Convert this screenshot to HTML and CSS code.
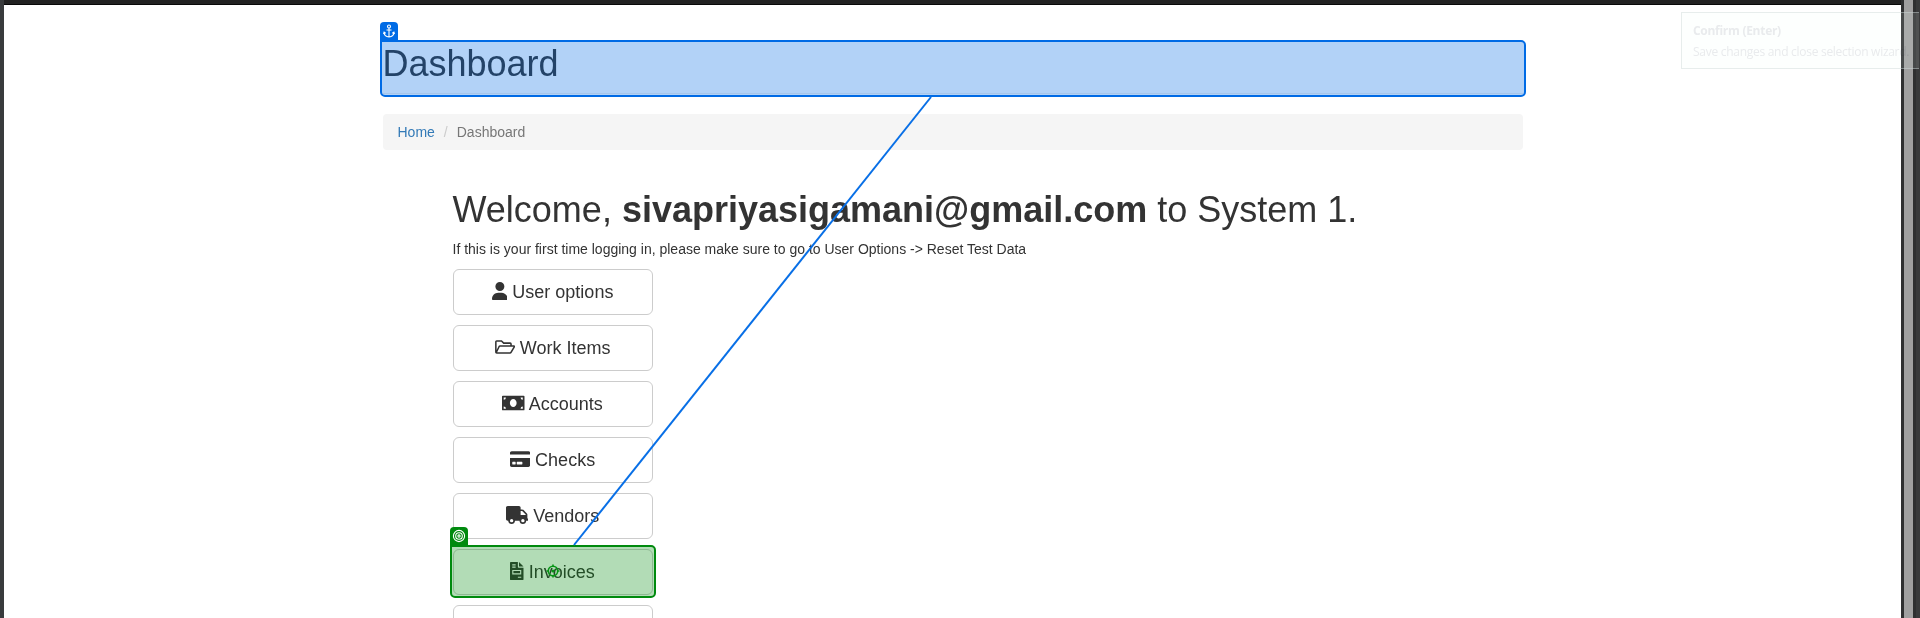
FILE: index.html
```html
<!DOCTYPE html>
<html lang="en">
<head>
<meta charset="utf-8">
<title>Dashboard</title>
<link rel="stylesheet" href="styles.css">
</head>
<body>
<div class="screen">
  <div class="edge-left"></div>
  <main class="page">
    <div class="navbar"></div>
    <div class="container">
      <header class="page-header"><h1>Dashboard</h1></header>
      <ol class="breadcrumb"><li><a class="crumb-link">Home</a></li><li class="slash">/</li><li class="active">Dashboard</li></ol>
      <section class="content">
        <h1>Welcome, <b>sivapriyasigamani@gmail.com</b> to System 1.</h1>
        <p class="hint">If this is your first time logging in, please make sure to go to User Options -&gt; Reset Test Data</p>
        <div class="menu">
          <button class="btn"><svg class="icon w-user" viewBox="0 0 448 512"><path d="M224 256A128 128 0 1 0 224 0a128 128 0 1 0 0 256zm-45.700 48C79.800 304 0 383.800 0 482.300 0 498.700 13.300 512 29.700 512H418.300c16.400 0 29.700-13.300 29.700-29.700C448 383.800 368.200 304 269.700 304z"/></svg> User options</button>
          <button class="btn"><svg class="icon w-folder" viewBox="0 0 576 512"><path class="line" d="M24 410V110q0-24 24-24h136l64 60h184q24 0 24 24v52M32 420l86-178q8-14 26-14h392q24 0 12 24l-88 150q-12 22-36 22H48q-24 0-24-24"/></svg> Work Items</button>
          <button class="btn"><svg class="icon w-wide" viewBox="0 0 640 512"><path fill-rule="evenodd" d="M24 48H616q24 0 24 24V440q0 24-24 24H24Q0 464 0 440V72Q0 48 24 48zM48 96v64q64 0 64-64zM528 96q0 64 64 64V96zM48 352v64h64q0-64-64-64zM592 352q-64 0-64 64h64zM320 144c-53 0-96 50-96 112s43 112 96 112 96-50 96-112-43-112-96-112z"/></svg> Accounts</button>
          <button class="btn"><svg class="icon w-folder" viewBox="0 0 576 512"><path fill-rule="evenodd" d="M0 128V80c0-26.500 21.500-48 48-48h480c26.500 0 48 21.500 48 48v48zM0 224h576v208c0 26.500-21.500 48-48 48H48c-26.500 0-48-21.500-48-48zM64 346v54q0 12 12 12h72q12 0 12-12v-54q0-12-12-12H76q-12 0-12 12zM192 346v54q0 12 12 12h136q12 0 12-12v-54q0-12-12-12H204q-12 0-12 12z"/></svg> Checks</button>
          <button class="btn"><svg class="icon w-wide" viewBox="0 0 640 512"><path fill-rule="evenodd" d="M624 352h-16V243.900c0-12.700-5.100-24.900-14.100-33.900L494 110.100c-9-9-21.200-14.100-33.900-14.100H416V48c0-26.500-21.500-48-48-48H48C21.500 0 0 21.500 0 48v320c0 26.500 21.500 48 48 48h16c0 53 43 96 96 96s96-43 96-96h128c0 53 43 96 96 96s96-43 96-96h48c8.800 0 16-7.200 16-16v-32c0-8.800-7.200-16-16-16zM160 464a48 48 0 1 1 0-96 48 48 0 0 1 0 96zM480 464a48 48 0 1 1 0-96 48 48 0 0 1 0 96zM560 256H416V144h44.100l99.900 99.900z"/></svg> Vendors</button>
          <button class="btn"><svg class="icon w-file" viewBox="0 0 384 512"><path fill-rule="evenodd" d="M24 0H224V136q0 24 24 24H384V488q0 24-24 24H24Q0 512 0 488V24Q0 0 24 0zM256 0l128 128H256zM64 64v32h96V64zM64 128v32h96v-32zM64 224v128h256V224zM96 256h192v64H96zM224 416v32h96v-32z"/></svg> Invoices</button>
          <button class="btn">&nbsp;</button>
        </div>
      </section>
    </div>
  </main>
  <div class="edge-right"><i class="gutter"></i><i class="scrollbar"></i><i class="gutter"></i><i class="outer"></i></div>

  <div class="selection anchor"><span class="badge"><svg viewBox="0 0 18 18"><circle cx="9" cy="4.500" r="1.500"/><path d="M9 6v9M6.500 8h5M4 10.500C4.200 13.500 6.500 14.700 9 15c2.500-.3 4.800-1.500 5-4.500M3.500 12l.6-1.800 1.600 1M14.500 12l-.6-1.800-1.600 1"/></svg></span></div>
  <div class="selection target"><span class="badge"><svg viewBox="0 0 18 18"><circle cx="9" cy="9" r="5.600"/><circle cx="9" cy="9" r="3.300"/><circle cx="9" cy="9" r="1.100"/></svg></span></div>
  <svg class="connector" viewBox="0 0 1920 618"><path class="link" d="M931 97L574 545"/><g class="marker"><circle cx="553" cy="571" r="4.700"/><path d="M553 564.500v2M553 575.500v2M546.500 571h2M557.500 571h2"/><circle class="dot" cx="553" cy="571" r="1.500"/></g></svg>
  <div class="tooltip"></div>
  <div class="tooltip-text"><b>Confirm (Enter)</b><span>Save changes and close selection wizard.</span></div>
</div>
</body>
</html>
```
FILE: styles.css
```css
* { box-sizing: border-box; }
body { margin: 0; font: 14px/20px "Liberation Sans", Arial, sans-serif; color: #333; background: #fff; }
.screen { position: relative; display: flex; width: 1920px; height: 618px; overflow: hidden; }
.edge-left { width: 4px; background: #393b3d; }
.page { flex: 1; overflow: hidden; background: #fff; }
.navbar { height: 5px; background: #222; border-bottom: 1px solid #080808; }
.edge-right { display: flex; width: 19px; }
.gutter { width: 3px; background: #2f3031; }
.scrollbar { width: 9px; background: #a0a0a0; }
.outer { width: 4px; background: #393a3b; }
.container { width: 1140px; margin-left: 379px; padding-top: 39px; }
h1 { margin: 0; font-size: 36px; line-height: 40px; font-weight: 400; }
.page-header { height: 50px; margin-bottom: 20px; border-bottom: 1px solid #eee; }
.page-header h1 { margin-left: -.5px; }
.breadcrumb { display: flex; height: 36px; margin: 0; padding: 8px 14.5px; list-style: none; background: #f5f5f5; border-radius: 4px; }
.crumb-link { color: #337ab7; }
.slash { padding: 0 9px; color: #ccc; }
.active { color: #777; }
.content { padding: 40px 70px 0; }
.content h1 { margin-left: -.5px; }
.hint { margin: 9px 0 10px -.5px; }
.menu { display: flex; flex-direction: column; gap: 10px; width: 200px; }
.btn { flex: none; height: 46px; padding: 10px 17px 10px 16px; font: 18px/24px "Liberation Sans", Arial, sans-serif; color: #333; background: #fff; border: 1px solid #ccc; border-radius: 6px; }
.icon { height: 18px; vertical-align: -2.25px; fill: #333; }
.icon .line { fill: none; stroke: #333; stroke-width: 44; }
.w-user { width: 15.75px; }
.w-folder { width: 20.25px; }
.w-wide { width: 22.5px; }
.w-file { width: 13.5px; }
.selection { position: absolute; border: 2px solid; border-radius: 0 5px 5px 5px; }
.anchor { left: 380px; top: 40px; width: 1146px; height: 57px; border-color: #006be5; background: rgba(0, 107, 229, .3); }
.target { left: 450px; top: 545px; width: 206px; height: 53px; border-color: #008a0e; background: rgba(0, 138, 14, .3); }
.badge { position: absolute; left: -2px; top: -20px; width: 18px; height: 18px; border-radius: 4px 4px 0 0; }
.badge svg { display: block; fill: none; stroke: #fff; stroke-width: 1.1; }
.anchor .badge { background: #006be5; }
.target .badge { background: #008a0e; }
.connector { position: absolute; left: 0; top: 0; width: 1920px; height: 618px; fill: none; }
.link { stroke: #086fe6; stroke-width: 2; }
.marker { stroke: #079516; stroke-width: 1.6; }
.dot { fill: #079516; stroke: none; }
.tooltip, .tooltip-text { position: absolute; left: 1681px; top: 12px; width: 238px; height: 57px; }
.tooltip { background: rgba(238, 253, 250, .12); border: 1px solid rgba(205, 215, 215, .45); border-right: 0; }
.tooltip-text { display: flex; flex-direction: column; gap: 2px; padding: 9px 12px; font: 12px/19px "Open Sans", sans-serif; letter-spacing: -.28px; white-space: nowrap; color: #ebebee; mix-blend-mode: multiply; }
.tooltip-text b { font-weight: 700; }
```
